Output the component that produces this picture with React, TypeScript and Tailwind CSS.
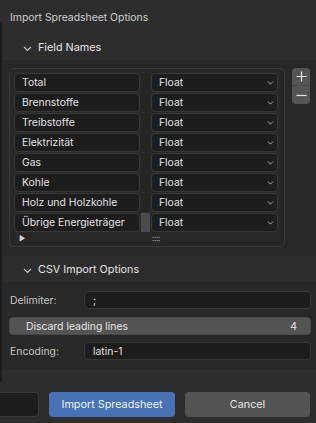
import { ReactNode } from 'react';

const FIELDS = [
  'Total',
  'Brennstoffe',
  'Treibstoffe',
  'Elektrizität',
  'Gas',
  'Kohle',
  'Holz und Holzkohle',
  'Übrige Energieträger'
];

function Chevron({ className }: { className?: string }) {
  return (
    <svg width="9" height="6" viewBox="0 0 9 6" className={className}>
      <path d="M1 1 L4.5 4.5 L8 1" fill="none" stroke="currentColor" strokeWidth="1.1" />
    </svg>
  );
}

function PanelHeader({ title }: { title: string }) {
  return (
    <div className="h-[26px] flex items-center pl-[23px] gap-[6px] text-[#e4e4e4] text-[10.8px] pt-[2px]">
      <Chevron className="text-[#c8c8c8] mt-[1px]" />
      <span>{title}</span>
    </div>
  );
}

function Field({ label, children }: { label: string; children: ReactNode }) {
  return (
    <div className="flex items-center h-[18px]">
      <div className="w-[84px] pl-[10px] text-[#c4c4c4] pt-[1px]">{label}</div>
      <div className="w-[227px] h-[18px] rounded-[4px] bg-[#1d1d1d] border border-[#373737] flex items-center pl-[8px] pt-[1px] text-[#e0e0e0]">
        {children}
      </div>
    </div>
  );
}

export default function App() {
  return (
    <div
      className="relative w-[316px] h-[423px] overflow-hidden bg-[#2d2d2d] text-[10.4px] leading-[14px] text-[#dcdcdc]"
      style={{ fontFamily: 'Inter, "DejaVu Sans", sans-serif' }}
    >
      <div className="absolute left-0 top-[22px] w-[2px] h-[360px] bg-[#1b1b1b]" />

      <div className="h-[34px] pl-[10px] pt-[11px] text-[#cfcfcf]">Import Spreadsheet Options</div>

      <PanelHeader title="Field Names" />

      <div className="bg-[#282828] pt-[8px] pb-[9px] flex pl-[9px] gap-[7px]">
        <div className="w-[276px] rounded-[5px] border border-[#3a3a3a] pt-[4px] pl-[4px] pr-[6px]">
          <div className="flex flex-col gap-[1px]">
            {FIELDS.map((name, i) => (
              <div key={name} className="flex h-[19px]">
                <div className="w-[127px] rounded-[4px] bg-[#1d1d1d] border border-[#383838] flex items-center pl-[7px] pt-[1px] text-[#e2e2e2]">
                  {name}
                </div>
                <div className={`w-[9px] ${i === FIELDS.length - 1 ? 'bg-[#4a4b50] mx-[1px]' : 'bg-[#242424] mx-[1px]'}`} />
                <div className="w-[128px] rounded-[4px] bg-[#1d1d1d] border border-[#383838] flex items-center justify-between pl-[7px] pr-[2px] pt-[1px] text-[#e2e2e2]">
                  <span>Float</span>
                  <Chevron className="text-[#c8c8c8] scale-75" />
                </div>
              </div>
            ))}
          </div>
          <div className="h-[14px] flex items-center relative">
            <span className="ml-[5px] text-[7px] text-[#cfcfcf]">▶</span>
            <span className="absolute left-[138px] top-[2px] text-[8px] leading-[8px] tracking-[-0.3px] text-[#bdbdbd]">::::</span>
          </div>
        </div>

        <div className="w-[18px] h-[36px] rounded-[4px] bg-[#545454] flex flex-col text-[#e6e6e6]">
          <div className="h-[18px] flex items-center justify-center border-b border-[#474747]">
            <svg width="11" height="11" viewBox="0 0 11 11">
              <path d="M5.5 0.5 V10.5 M0.5 5.5 H10.5" stroke="currentColor" strokeWidth="1.2" />
            </svg>
          </div>
          <div className="h-[18px] flex items-center justify-center">
            <svg width="11" height="11" viewBox="0 0 11 11">
              <path d="M0.5 5.5 H10.5" stroke="currentColor" strokeWidth="1.2" />
            </svg>
          </div>
        </div>
      </div>

      <PanelHeader title="CSV Import Options" />

      <div className="bg-[#282828] pt-[9px] pb-[9px] flex flex-col gap-[8px]">
        <Field label="Delimiter:">;</Field>
        <div className="ml-[9px] w-[302px] h-[18px] rounded-[4px] bg-[#545454] border border-[#4a4a4a] flex items-center justify-between pl-[16px] pr-[13px] pt-[1px] text-[#e6e6e6]">
          <span>Discard leading lines</span>
          <span>4</span>
        </div>
        <div className="-mt-[1px]">
          <Field label="Encoding:">latin-1</Field>
        </div>
      </div>

      <div className="flex gap-[10px] pt-[23px] ml-[-87px] text-[10.8px]">
        <div className="w-[126px] h-[25px] rounded-[4px] bg-[#1d1d1d] border border-[#3a3a3a]" />
        <div className="w-[126px] h-[25px] rounded-[4px] bg-[#4772b3] flex items-center justify-center text-[#f0f0f0]">
          Import Spreadsheet
        </div>
        <div className="w-[125px] h-[25px] rounded-[4px] bg-[#545454] flex items-center justify-center text-[#e6e6e6]">
          Cancel
        </div>
      </div>
    </div>
  );
}
